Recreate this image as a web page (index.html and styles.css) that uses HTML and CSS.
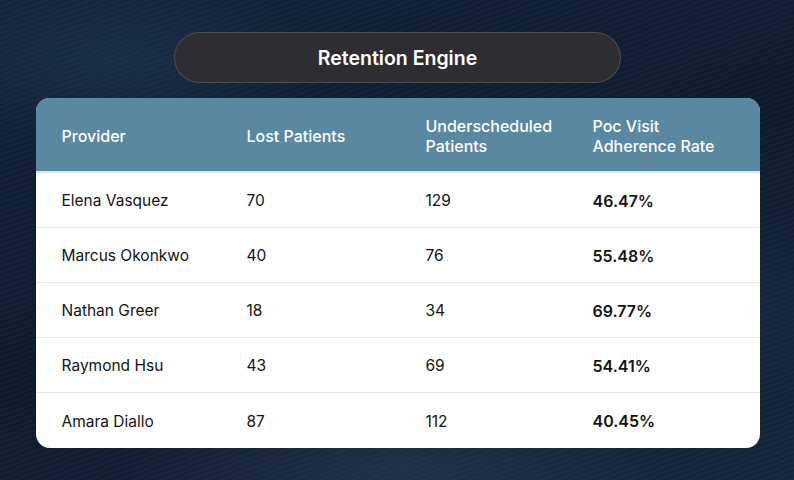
FILE: index.html
```
<!DOCTYPE html>
<html>
<head>
<meta charset="utf-8">
<link rel="stylesheet" href="styles.css">
</head>
<body>
<div class="page">
  <div class="pill">Retention Engine</div>
  <div class="card">
    <div class="row head">
      <div>Provider</div>
      <div>Lost Patients</div>
      <div>Underscheduled<br>Patients</div>
      <div>Poc Visit<br>Adherence Rate</div>
    </div>
    <div class="row"><div>Elena Vasquez</div><div>70</div><div>129</div><div class="pct">46.47%</div></div>
    <div class="row"><div>Marcus Okonkwo</div><div>40</div><div>76</div><div class="pct">55.48%</div></div>
    <div class="row"><div>Nathan Greer</div><div>18</div><div>34</div><div class="pct">69.77%</div></div>
    <div class="row"><div>Raymond Hsu</div><div>43</div><div>69</div><div class="pct">54.41%</div></div>
    <div class="row last"><div>Amara Diallo</div><div>87</div><div>112</div><div class="pct">40.45%</div></div>
  </div>
</div>
</body>
</html>
```
FILE: styles.css
```
html, body {
  margin: 0;
  padding: 0;
}
body {
  width: 794px;
  height: 480px;
  overflow: hidden;
  font-family: Inter, "Noto Sans", sans-serif;
  background:
    radial-gradient(ellipse 300px 120px at 120px 60px, rgba(40,70,100,0.35), transparent 70%),
    radial-gradient(ellipse 250px 160px at 700px 300px, rgba(35,60,90,0.35), transparent 70%),
    radial-gradient(ellipse 400px 100px at 400px 470px, rgba(60,80,100,0.35), transparent 70%),
    repeating-linear-gradient(160deg, rgba(255,255,255,0.025) 0 2px, transparent 2px 5px),
    linear-gradient(160deg, #12233a 0%, #0c1a2b 50%, #15263a 100%);
}
.page {
  display: flex;
  flex-direction: column;
  align-items: center;
  padding-top: 32px;
  padding-left: 1px;
}
.pill {
  width: 445px;
  height: 49px;
  box-sizing: content-box;
  border-radius: 26px;
  background: #2e2d32;
  border: 1px solid rgba(255,255,255,0.16);
  color: #fff;
  font-size: 19.5px;
  font-weight: 600;
  display: flex;
  align-items: center;
  justify-content: center;
  padding-top: 0;
}
.pill::before {
  content: "";
}
.card {
  margin-top: 15px;
  width: 724px;
  background: #fff;
  border-radius: 14px;
  overflow: hidden;
}
.row {
  display: grid;
  grid-template-columns: 185px 179px 167px 1fr;
  padding: 1px 26px 0;
  height: 55px;
  align-items: center;
  border-bottom: 1px solid #e6e8ea;
  box-sizing: border-box;
  font-size: 15.5px;
  color: #141414;
}
.row.last {
  border-bottom: none;
}
.row.head {
  height: 75px;
  padding-top: 3px;
  background: #5a88a0;
  color: #fff;
  font-size: 16px;
  font-weight: 500;
  line-height: 20px;
  border-bottom: 2px solid #d9e4ec;
}
.pct {
  font-size: 16px;
  font-weight: 600;
}
```
